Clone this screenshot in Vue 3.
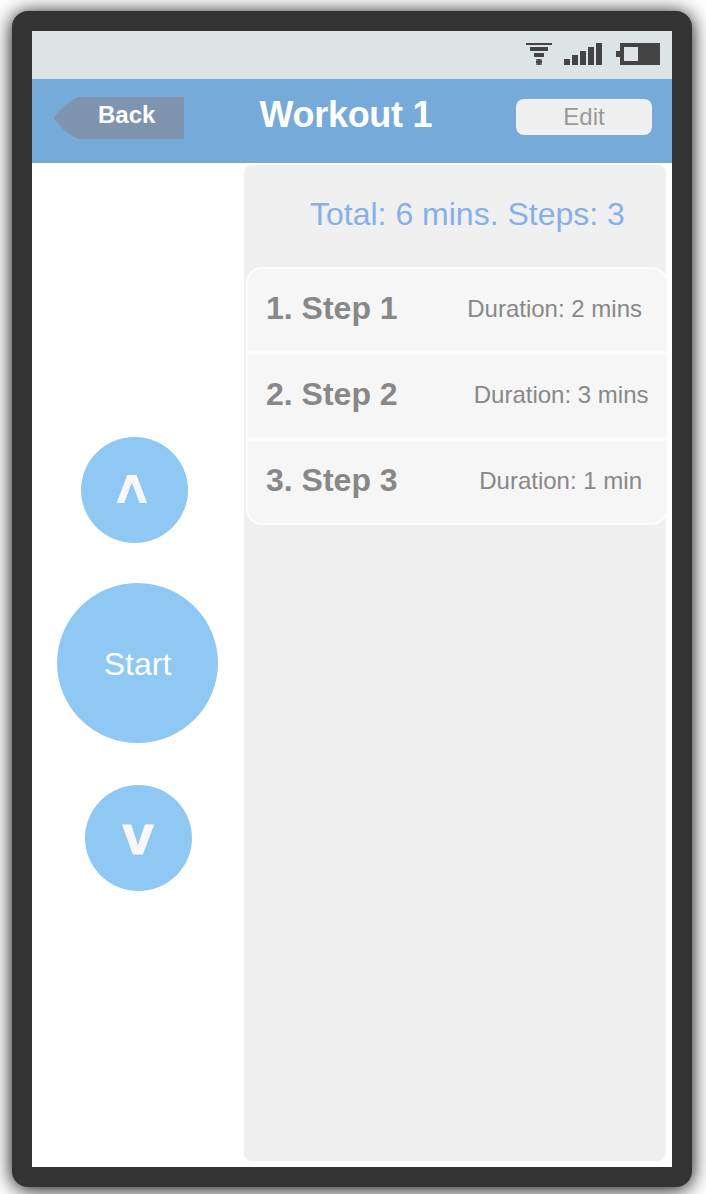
<script setup>
const steps = [
  { id: 1, name: '1. Step 1', duration: 'Duration: 2 mins' },
  { id: 2, name: '2. Step 2', duration: 'Duration: 3 mins', wide: true },
  { id: 3, name: '3. Step 3', duration: 'Duration: 1 min' },
]
</script>

<template>
  <div class="stage">
    <div class="phone">
      <div class="status">
        <svg width="134" height="22" viewBox="0 0 134 22" shape-rendering="crispEdges" fill="#444">
          <path d="M0 0h26v2H0zM4 4h18v4H4zM8 10h10v4H8z" />
          <path d="M10 16h6v6h-6z" opacity=".7" />
          <path d="M12 16h2v2h2v2h-2v2h-2v-2h-2v-2h2z" />
          <path d="M38 16h6v6h-6zM46 12h6v10h-6zM54 8h6v14h-6zM62 4h6v18h-6zM70 0h6v22h-6z" />
          <path fill-rule="evenodd" d="M94 0h40v22H94v-8h-4V8h4zM98 4v14h14V4z" />
        </svg>
      </div>
      <header class="nav">
        <button class="back">
          <svg class="back-shape" width="130" height="42" viewBox="0 0 130 42">
            <path d="M24 0H130V42H24Q8 34 0 21Q8 8 24 0Z" fill="#7f94ae" />
          </svg>
          <span class="back-label">Back</span>
        </button>
        <h1 class="title">Workout 1</h1>
        <button class="edit">Edit</button>
      </header>
      <main class="content">
        <aside class="controls">
          <button class="circle up"><span>^</span></button>
          <button class="circle start">Start</button>
          <button class="circle down"><span>v</span></button>
        </aside>
        <section class="panel">
          <p class="summary">Total: 6 mins. Steps: 3</p>
          <ul class="list">
            <li v-for="s in steps" :key="s.id" class="row" :class="{ wide: s.wide }">
              <span class="name">{{ s.name }}</span>
              <span class="duration">{{ s.duration }}</span>
            </li>
          </ul>
        </section>
      </main>
    </div>
  </div>
</template>

<style>
body { margin: 0; background: #fff; }
</style>

<style scoped>
.stage {
  box-sizing: border-box;
  width: 706px;
  height: 1194px;
  padding: 11px 0 0 12px;
  overflow: hidden;
  font-family: "Liberation Sans", Arial, sans-serif;
}
.phone {
  box-sizing: border-box;
  display: flex;
  flex-direction: column;
  width: 680px;
  height: 1176px;
  border: 20px solid #333;
  border-radius: 16px;
  background: linear-gradient(#fff, #fff) padding-box, #333;
  box-shadow: 0 2px 20px #000;
}
button {
  padding: 0;
  border: 0;
  font-family: inherit;
}
.status {
  box-sizing: border-box;
  display: flex;
  justify-content: flex-end;
  height: 48px;
  padding: 12px 12px 0 0;
  background: #dce4e6;
}
.nav {
  display: flex;
  align-items: flex-start;
  box-sizing: border-box;
  height: 84px;
  padding: 18px 20px 0 22px;
  background: #76aad8;
}
.back {
  display: grid;
  width: 130px;
  height: 42px;
  background: none;
}
.back-shape, .back-label { grid-area: 1 / 1; }
.back-label {
  padding-left: 44px;
  color: #fff;
  font-size: 24px;
  font-weight: 700;
  line-height: 36px;
  text-align: left;
}
.title {
  margin: 0 0 0 75.5px;
  color: #fff;
  font-size: 36px;
  font-weight: 700;
  letter-spacing: -0.3px;
  line-height: 36px;
  white-space: nowrap;
}
.edit {
  width: 136px;
  height: 36px;
  margin: 2px 0 0 auto;
  border-radius: 8px;
  background: #f0f0f0;
  color: #999;
  font-size: 24px;
  line-height: 36px;
}
.content {
  display: flex;
  flex: 1;
}
.controls {
  display: flex;
  flex-direction: column;
  align-items: flex-start;
  box-sizing: border-box;
  width: 212px;
  padding-top: 274px;
}
.circle {
  border-radius: 50%;
  background: #8fc8f3;
  color: #fff;
  font-size: 32px;
}
.up, .down {
  box-sizing: border-box;
  width: 107px;
  height: 106px;
  color: #f8f8f8;
  font-size: 56px;
  font-weight: 700;
}
.up span, .down span {
  display: block;
  height: 106px;
}
.up {
  margin-left: 48.5px;
  padding: 0 5px 0 0;
  font-size: 54px;
  line-height: 114px;
  -webkit-text-stroke: 1.6px #f8f8f8;
}
.up span {
  transform: scale(.96, 1.1);
  transform-origin: 50% 36%;
}
.start {
  width: 161px;
  height: 160px;
  margin: 40px 0 42px 24.5px;
  padding-left: 1px;
  line-height: 162px;
}
.down {
  margin-left: 52.5px;
  line-height: 100px;
  -webkit-text-stroke: 1px #f8f8f8;
}
.panel {
  width: 422px;
  height: 996px;
  margin-top: 2px;
  border-radius: 8px;
  background: #f0f0f0;
}
.summary {
  height: 102px;
  margin: 0;
  padding-left: 66px;
  color: #86b0e9;
  font-size: 32px;
  line-height: 98px;
  white-space: nowrap;
}
.list {
  box-sizing: border-box;
  width: 422px;
  height: 258px;
  margin: 0 0 0 2px;
  padding: 0;
  border: 2px solid #fcfcfc;
  border-radius: 16px;
  background: #f6f6f6;
  list-style: none;
}
.row {
  display: flex;
  justify-content: space-between;
  box-sizing: border-box;
  height: 86px;
  padding: 0 24px 0 18px;
  border-bottom: 4px solid #fbfbfb;
  color: #888;
  line-height: 79px;
}
.row.wide { padding-right: 17.5px; }
.row:last-child { height: 82px; border: 0; }
.name {
  font-size: 32px;
  font-weight: 700;
}
.duration {
  font-size: 24px;
  line-height: 80px;
}
</style>
